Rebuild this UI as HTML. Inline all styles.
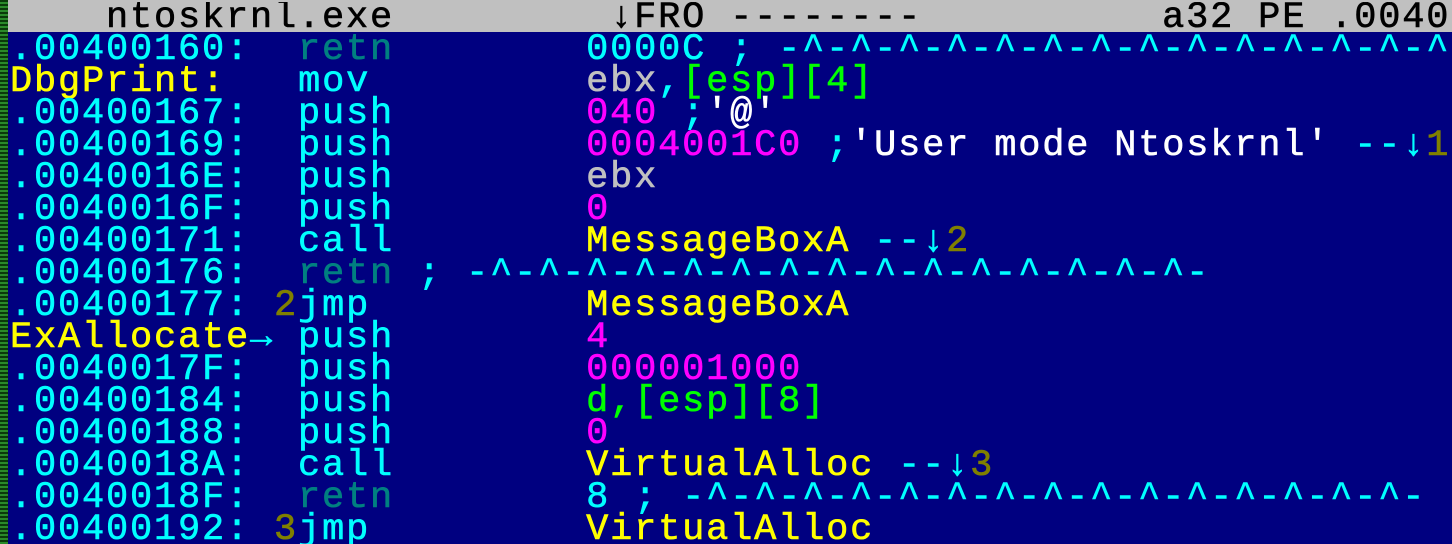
<!DOCTYPE html>
<html><head><meta charset="utf-8"><style>
html,body{margin:0;padding:0;width:1452px;height:544px;overflow:hidden;background:#000080;position:relative;}
.strip{position:absolute;left:0;top:0;width:8px;height:544px;background:repeating-linear-gradient(#0a3a0a 0 2px,#2a8a2a 2px 4px);}
.hdr{position:absolute;left:8px;top:0;width:1444px;height:32px;background:#c0c0c0;}
pre{position:absolute;left:10px;top:2px;width:1442px;height:542px;overflow:hidden;margin:0;font-family:"Liberation Mono",monospace;font-size:37px;letter-spacing:1.8px;line-height:32px;font-weight:normal;white-space:pre;color:#00ffff;-webkit-text-stroke:0.6px currentColor;}
.k{color:#000}.c{color:#00ffff}.t{color:#008080}.y{color:#ffff00}.m{color:#ff00ff}.w{color:#ffffff}.g{color:#c0c0c0}.gr{color:#00ff00}.o{color:#808000}
</style></head><body>
<div class="strip"></div><div class="hdr"></div>
<pre><span class="k">    ntoskrnl.exe         ↓FRO --------          a32 PE .00400</span>
<span class="c">.00400160:  </span><span class="t">retn</span>        <span class="c">0000C ; -^-^-^-^-^-^-^-^-^-^-^-^-^-^</span>
<span class="y">DbgPrint:</span>   <span class="c">mov</span>         <span class="g">ebx</span><span class="c">,</span><span class="gr">[esp][4]</span>
<span class="c">.00400167:  push        </span><span class="m">040</span> <span class="c">;</span><span class="w">'@'</span>
<span class="c">.00400169:  push        </span><span class="m">0004001C0</span> <span class="c">;</span><span class="w">'User mode Ntoskrnl'</span> <span class="c">--↓</span><span class="o">1</span>
<span class="c">.0040016E:  push        </span><span class="g">ebx</span>
<span class="c">.0040016F:  push        </span><span class="m">0</span>
<span class="c">.00400171:  call        </span><span class="y">MessageBoxA</span> <span class="c">--↓</span><span class="o">2</span>
<span class="c">.00400176:  </span><span class="t">retn</span><span class="c"> ; -^-^-^-^-^-^-^-^-^-^-^-^-^-^-^-</span>
<span class="c">.00400177: </span><span class="o">2</span><span class="c">jmp         </span><span class="y">MessageBoxA</span>
<span class="y">ExAllocate</span><span class="c">→ push        </span><span class="m">4</span>
<span class="c">.0040017F:  push        </span><span class="m">000001000</span>
<span class="c">.00400184:  push        </span><span class="gr">d,[esp][8]</span>
<span class="c">.00400188:  push        </span><span class="m">0</span>
<span class="c">.0040018A:  call        </span><span class="y">VirtualAlloc</span> <span class="c">--↓</span><span class="o">3</span>
<span class="c">.0040018F:  </span><span class="t">retn</span><span class="c">        8 ; -^-^-^-^-^-^-^-^-^-^-^-^-^-^-^-</span>
<span class="c">.00400192: </span><span class="o">3</span><span class="c">jmp         </span><span class="y">VirtualAlloc</span></pre>
</body></html>
